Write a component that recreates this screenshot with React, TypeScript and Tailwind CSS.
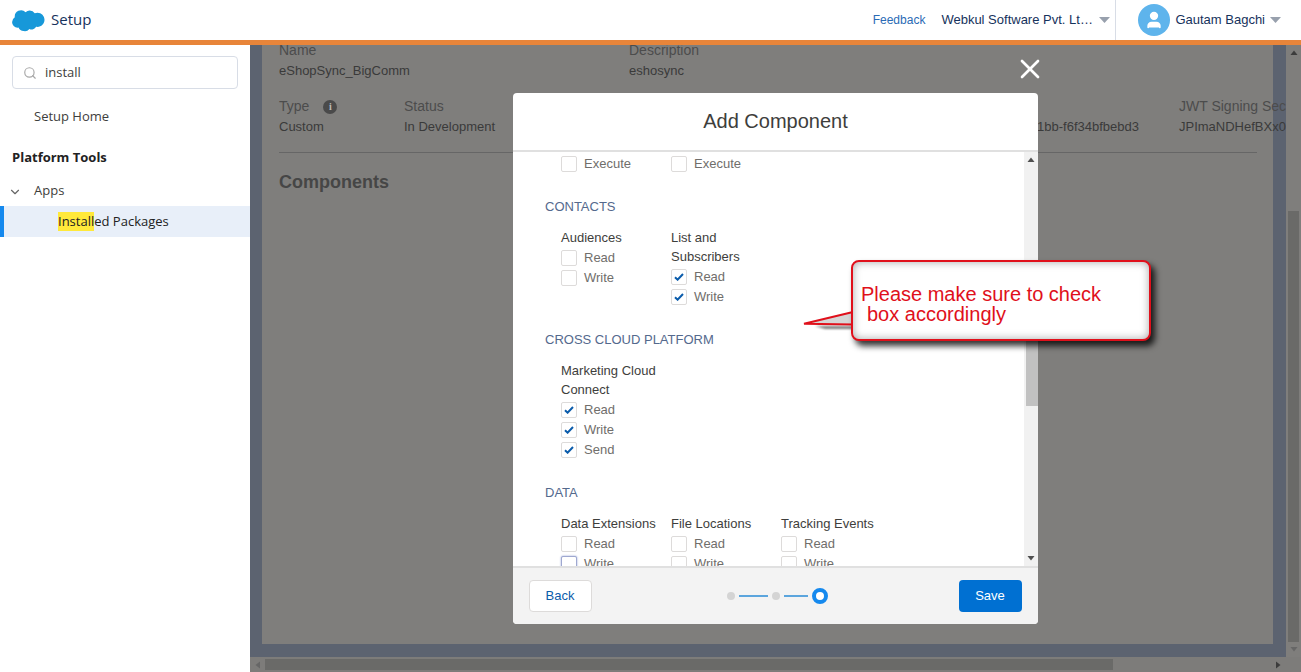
import React from 'react';
import { ChevronDown, Search, User, X } from 'lucide-react';

const Caret = ({ className = '' }: { className?: string }) => (
	<svg width="11" height="6" viewBox="0 0 11 6" className={className}>
		<path d="M0 0h11L5.500 6z" fill="#98a0ad" />
	</svg>
);

const Arrow = ({ d, fill }: { d: string; fill: string }) => (
	<svg width="8" height="8" viewBox="0 0 8 8">
		<path d={d} fill={fill} />
	</svg>
);

const Logo = () => (
	<svg width="33" height="23" viewBox="0 0 33 23">
		<path
			d="M13.600 3.200A5.600 5.600 0 0 1 17.700 1.400a5.700 5.700 0 0 1 5 2.900 6.900 6.900 0 0 1 2.800-.6c3.900 0 7 3.200 7 7.100s-3.100 7.100-7 7.100c-.5 0-.9 0-1.400-.1a5.100 5.100 0 0 1-6.700 2.100A5.800 5.800 0 0 1 11.600 22a5.500 5.500 0 0 1-5.100-3.400 4.500 4.500 0 0 1-.9.1A5.500 5.500 0 0 1 .1 13.100a5.600 5.600 0 0 1 2.700-4.800A6.300 6.300 0 0 1 13.600 3.200z"
			fill="#1798d9"
		/>
	</svg>
);

const Check = ({ label, checked, focus }: { label: string; checked?: boolean; focus?: boolean }) => (
	<div className="flex items-center h-5 gap-[7px] text-[#706e6b]">
		<span
			className={`flex items-center justify-center w-4 h-4 bg-white rounded-[2px] border ${
				focus ? 'border-[#9fa8d0] shadow-[0_0_2px_#8a9ad0]' : 'border-[#dddbda]'
			}`}
		>
			{checked && (
				<svg width="10" height="8" viewBox="0 0 10 8">
					<path d="M1 4.200 3.600 6.700 9 1" fill="none" stroke="#0b5cab" strokeWidth="2" />
				</svg>
			)}
		</span>
		<span>{label}</span>
	</div>
);

const Perm = ({ title, items }: { title: string[]; items: { label: string; checked?: boolean; focus?: boolean }[] }) => (
	<div className="w-[110px] shrink-0">
		<div className="pb-[1px]">
			{title.map((x) => (
				<p key={x} className="h-[19px] leading-[19px] text-[#3e3e3c] whitespace-nowrap">
					{x}
				</p>
			))}
		</div>
		{items.map((x) => (
			<Check key={x.label} {...x} />
		))}
	</div>
);

const Section = ({ title, children }: { title: string; children: React.ReactNode }) => (
	<div className="mt-[23px]">
		<p className="h-5 leading-5 -ml-4 text-[#54698d]">{title}</p>
		<div className="flex mt-[11px]">{children}</div>
	</div>
);

const Modal = () => (
	<div className="absolute top-[48px] left-[263px] flex flex-col w-[525px] h-[531px] bg-white rounded-[4px] overflow-hidden text-[13px] font-['Liberation_Sans',sans-serif]">
		<div className="flex items-center justify-center h-[57px] pb-[2px] shrink-0 text-xl text-[#3e3e3c]">Add Component</div>
		<div className="h-[2px] shrink-0 bg-[#e0e0e0]" />
		<div className="flex flex-1 min-h-0">
			<div className="flex-1 pl-[48px] pt-[2px] overflow-hidden">
				<div className="flex">
					<div className="w-[110px]">
						<Check label="Execute" />
					</div>
					<div className="w-[110px]">
						<Check label="Execute" />
					</div>
				</div>
				<Section title="CONTACTS">
					<Perm title={['Audiences']} items={[{ label: 'Read' }, { label: 'Write' }]} />
					<Perm
						title={['List and', 'Subscribers']}
						items={[
							{ label: 'Read', checked: true },
							{ label: 'Write', checked: true },
						]}
					/>
				</Section>
				<Section title="CROSS CLOUD PLATFORM">
					<Perm
						title={['Marketing Cloud', 'Connect']}
						items={[
							{ label: 'Read', checked: true },
							{ label: 'Write', checked: true },
							{ label: 'Send', checked: true },
						]}
					/>
				</Section>
				<Section title="DATA">
					<Perm title={['Data Extensions']} items={[{ label: 'Read' }, { label: 'Write', focus: true }]} />
					<Perm title={['File Locations']} items={[{ label: 'Read' }, { label: 'Write' }]} />
					<Perm title={['Tracking Events']} items={[{ label: 'Read' }, { label: 'Write' }]} />
				</Section>
			</div>
			<div className="flex flex-col items-center justify-between w-[14px] pt-[4px] pb-[4px] bg-[#f1f1f1]">
				<Arrow d="M4 1.500 7.500 6H.5z" fill="#505050" />
				<div className="flex flex-col w-full flex-1 pt-[137px] pb-[148px]">
					<div className="flex-1 bg-[#c1c1c1] ml-[2px]" />
				</div>
				<Arrow d="M4 6.500.5 2h7z" fill="#505050" />
			</div>
		</div>
		<div className="flex items-center justify-between h-[58px] shrink-0 pl-4 pr-4 bg-[#f3f3f3] border-t-2 border-[#e0e0e0]">
			<button className="w-[63px] h-8 bg-white border border-[#dddbda] rounded-[4px] text-[#0b5cab] pr-[1px]">Back</button>
			<div className="flex items-center ml-[4px]">
				<span className="w-2 h-2 rounded-full bg-[#d4d4d4]" />
				<span className="w-[29px] h-[2px] ml-[4px] bg-[#5ba5dd]" />
				<span className="w-2 h-2 ml-[4px] rounded-full bg-[#d4d4d4]" />
				<span className="w-6 h-[2px] ml-[4px] bg-[#5ba5dd]" />
				<span className="w-4 h-4 ml-[4px] rounded-full border-[4px] border-[#1589ee] bg-white" />
			</div>
			<button className="w-[63px] h-8 bg-[#0070d2] rounded-[4px] text-white pr-[1px]">Save</button>
		</div>
	</div>
);

const Callout = () => (
	<div className="absolute top-[215px] left-[553px] w-[348px] h-[81px] font-['Liberation_Sans',sans-serif]">
		<svg width="52" height="40" viewBox="0 0 52 40" className="absolute left-0 top-[41px]">
			<path d="M12 25h38v3H22z" fill="#000" opacity=".5" className="blur-[1px]" />
			<path d="M50 11 1 22.800l49 .7" fill="#d6d6d6" stroke="#e0101b" strokeWidth="2" />
		</svg>
		<div className="absolute left-[48px] top-0 w-[300px] h-[81px] bg-white border-2 border-[#e0101b] rounded-lg shadow-[4px_5px_6px_rgba(0,0,0,0.8),inset_0_0_8px_rgba(0,0,0,0.35)] pl-[8px] pt-[22px] text-xl leading-5 text-[#e0101b]">
			<p>Please make sure to check</p>
			<p className="pl-[6px]">box accordingly</p>
		</div>
	</div>
);

const Background = () => (
	<div className="flex-1 min-w-0 flex flex-col overflow-hidden bg-[#5c6370]">
		<div className="flex flex-1 min-h-0 overflow-hidden">
			<div className="flex-1 min-w-0 flex flex-col pl-3 pr-[13px] pb-[13px]">
				<div className="flex-1 bg-[#7f7e7c] pl-[17px] pr-4 text-[13px] font-['Liberation_Sans',sans-serif] text-[#3a3a3a]">
					<div className="flex">
						<div className="w-[350px]">
							<p className="text-sm leading-[19px] -mt-[4px] text-[#4c4c4c]">Name</p>
							<p className="mt-[1px] leading-5">eShopSync_BigComm</p>
						</div>
						<div>
							<p className="text-sm leading-[19px] -mt-[4px] text-[#4c4c4c]">Description</p>
							<p className="mt-[1px] leading-5">eshosync</p>
						</div>
					</div>
					<div className="flex mt-[16px] whitespace-nowrap">
						<div className="w-[125px] shrink-0">
							<div className="flex items-center text-sm leading-[19px] text-[#4c4c4c]">
								<span>Type</span>
								<span className="flex items-center justify-center w-[14px] h-[14px] ml-[14px] rounded-full bg-[#4a4a4a] text-[10px] font-bold text-[#bbb] font-['Liberation_Serif',serif]">
									i
								</span>
							</div>
							<p className="mt-[1px] leading-5">Custom</p>
						</div>
						<div className="w-[455px] shrink-0">
							<p className="text-sm leading-[19px] text-[#4c4c4c]">Status</p>
							<p className="mt-[1px] leading-5">In Development</p>
						</div>
						<div className="w-[280px] shrink-0 pt-5 text-right">
							<p className="leading-5">1bb-f6f34bfbebd3</p>
						</div>
						<div className="w-[40px] shrink-0" />
						<div className="w-0">
							<p className="text-sm leading-[19px] text-[#4c4c4c]">JWT Signing Secret</p>
							<p className="mt-[1px] leading-5">JPImaNDHefBXx0</p>
						</div>
					</div>
					<div className="h-px mt-[15px] bg-[#666]" />
					<p className="mt-[19px] text-lg leading-5 font-bold text-[#464646]">Components</p>
				</div>
			</div>
			<div className="flex flex-col items-center w-[15px] shrink-0 bg-[#7f7e7c] py-1 relative">
				<Arrow d="M4 1.500 7.500 6H.5z" fill="#3c3c3c" />
				<div className="w-[11px] mt-[154px] h-[431px] bg-[#6a6a68]" />
				<div className="mt-[3px]">
					<Arrow d="M4 6.500.5 2h7z" fill="#666" />
				</div>
			</div>
		</div>
		<div className="flex items-center h-[15px] shrink-0 bg-[#7d7c7a] px-1">
			<Arrow d="M1.500 4 6 .5v7z" fill="#666" />
			<div className="w-[848px] h-[11px] ml-[3px] bg-[#6a6a68]" />
			<div className="ml-auto mr-[15px]">
				<Arrow d="M6.500 4 2 7.500v-7z" fill="#3c3c3c" />
			</div>
		</div>
	</div>
);

const Sidebar = () => (
	<div className="w-[250px] shrink-0 bg-white text-[13px] text-[#16325c] font-['Open_Sans',sans-serif]">
		<div className="flex items-center h-[33px] mx-3 mt-[11px] pl-[10px] border border-[#d8dde6] rounded-[4px] text-[#3e3e3c]">
			<Search size={14} className="text-[#a8a8a8]" />
			<span className="ml-2">install</span>
		</div>
		<p className="mt-[17px] pl-[34px] leading-5 text-[#3e3e3c]">Setup Home</p>
		<p className="mt-[21px] pl-3 leading-5 font-bold text-[#222]">Platform Tools</p>
		<div className="flex items-center mt-[14px] h-5 text-[#3e3e3c]">
			<ChevronDown size={14} className="ml-2 mt-[2px] text-[#666]" />
			<span className="ml-3">Apps</span>
		</div>
		<div className="flex items-center h-[31px] mt-[5px] bg-[#e8eff9] border-l-4 border-[#1589ee] pl-[54px] text-[#222]">
			<span className="bg-[#ffe93b]">Install</span>
			<span>ed Packages</span>
		</div>
	</div>
);

const App = () => (
	<div className="flex flex-col w-[1301px] h-[672px] overflow-hidden bg-white">
		<div className="flex items-center h-10 shrink-0 pl-3 bg-white text-[#16325c] font-['Liberation_Sans',sans-serif]">
			<Logo />
			<span className="ml-[6px] -mt-[1px] text-[15px] font-['Open_Sans',sans-serif]">Setup</span>
			<span className="ml-auto text-xs text-[#2a6bb5]">Feedback</span>
			<span className="ml-[16px] w-[152px] text-[13px] truncate whitespace-nowrap">Webkul Software Pvt. Ltd. India</span>
			<Caret className="ml-[6px]" />
			<div className="w-px h-10 ml-[5px] bg-[#d8dde6]" />
			<span className="flex items-center justify-center w-8 h-8 ml-[22px] rounded-full bg-[#5eb4ec]">
				<User size={20} fill="white" color="white" />
			</span>
			<span className="ml-[5px] text-[13px]">Gautam Bagchi</span>
			<Caret className="ml-[5px] mr-5" />
		</div>
		<div className="h-[5px] shrink-0 bg-[#e8853a]" />
		<div className="relative flex flex-1 min-h-0">
			<Sidebar />
			<div className="relative flex flex-1 min-w-0">
				<Background />
				<X size={32} strokeWidth={2} color="white" className="absolute top-[8px] left-[764px]" />
				<Modal />
				<Callout />
			</div>
		</div>
	</div>
);

export default App;
